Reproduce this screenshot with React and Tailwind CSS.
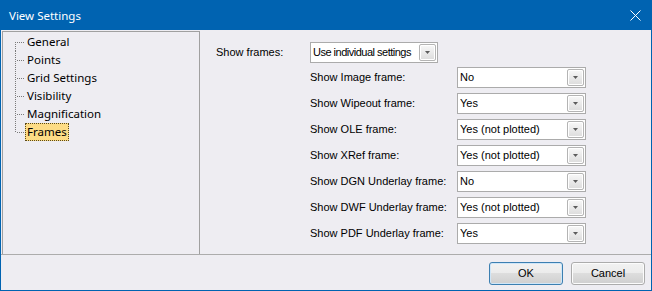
import React from 'react';

const treeItems = ['General', 'Points', 'Grid Settings', 'Visibility', 'Magnification', 'Frames'];

const frameRows = [
  ['Show Image frame:', 'No'],
  ['Show Wipeout frame:', 'Yes'],
  ['Show OLE frame:', 'Yes (not plotted)'],
  ['Show XRef frame:', 'Yes (not plotted)'],
  ['Show DGN Underlay frame:', 'No'],
  ['Show DWF Underlay frame:', 'Yes (not plotted)'],
  ['Show PDF Underlay frame:', 'Yes'],
];

function TreeLines({ first, last }) {
  return (
    <svg width="10" height="18" className="shrink-0" shapeRendering="crispEdges">
      <line x1="0.5" x2="0.5" y1={first ? 9 : 0} y2={last ? 10 : 18} stroke="#7a7a7a" strokeDasharray="1 1" />
      <line x1="2" x2="10" y1="9.5" y2="9.5" stroke="#7a7a7a" strokeDasharray="1 1" />
    </svg>
  );
}

function DropButton() {
  return (
    <div className="w-[17px] h-[17px] shrink-0 rounded-[2px] border border-[#b4b4b4] bg-gradient-to-b from-[#f8f8f8] to-[#dcdcdc] shadow-[inset_0_0_0_1px_#ffffff] flex items-center justify-center">
      <svg width="5" height="3" viewBox="0 0 5 3">
        <path d="M0 0h5L2.5 3z" fill="#5c5c5c" />
      </svg>
    </div>
  );
}

function Combo({ value, width, tight }) {
  return (
    <div className={`flex items-center h-[21px] ${width} bg-white border border-[#ababab] pl-[2px] pr-[1px]`}>
      <span className={`flex-1 min-w-0 overflow-hidden whitespace-nowrap leading-[19px] ${tight ? 'tracking-[-0.5px]' : ''}`}>{value}</span>
      <DropButton />
    </div>
  );
}

export default function App() {
  return (
    <div className="w-[652px] h-[291px] border border-[#0063b1] bg-[#eeedf2] flex flex-col text-black overflow-hidden">
      {/* title bar */}
      <div className="h-[29px] shrink-0 bg-[#0063b1] flex items-center justify-between pl-[8px] pr-[10px] text-white text-[11.5px] font-['Noto_Sans',sans-serif]">
        <span>View Settings</span>
        <svg width="11" height="11" viewBox="0 0 11 11">
          <path d="M0.5 0.5L10.5 10.5M10.5 0.5L0.5 10.5" stroke="#ffffff" strokeWidth="1" />
        </svg>
      </div>

      {/* body */}
      <div className="h-[225px] shrink-0 flex border-b border-[#acacac] pl-[1px] pt-[1px]">
        <div className="w-[198px] border-l border-t border-r border-[#a0a0a0] pt-[1px] pl-[12px] font-['Noto_Sans',sans-serif] text-[11.5px]">
          {treeItems.map((item, i) => (
            <div key={item} className="flex h-[18px] items-stretch">
              <TreeLines first={i === 0} last={i === treeItems.length - 1} />
              <span
                className={`px-[1px] leading-[16px] border ${item === 'Frames' ? 'bg-[#fddc86] border-dotted border-[#5a4a1a]' : 'border-transparent'}`}
              >
                {item}
              </span>
            </div>
          ))}
        </div>

        <div className="flex-1 pl-[16px] pt-[11px] font-['Liberation_Sans',Arial,sans-serif] text-[11px]">
          <div className="flex items-center">
            <span className="w-[94px]">Show frames:</span>
            <Combo value="Use individual settings" width="w-[128px]" tight />
          </div>
          <div className="ml-[94px] mt-[4px] flex flex-col gap-[5px]">
            {frameRows.map(([label, value]) => (
              <div key={label} className="flex items-center">
                <span className="w-[147px]">{label}</span>
                <Combo value={value} width="w-[129px]" />
              </div>
            ))}
          </div>
        </div>
      </div>

      {/* footer */}
      <div className="flex-1 flex justify-end items-start pt-[7px] pr-[6px] gap-[8px] font-['Liberation_Sans',Arial,sans-serif] text-[11px]">
        <button className="w-[74px] h-[23px] rounded-[3px] border border-[#3c7fb1] shadow-[inset_0_0_0_1px_#cfe6f8] bg-[linear-gradient(to_bottom,#f2f2f2_0%,#ebebeb_50%,#dddddd_50%,#cfcfcf_100%)]">
          OK
        </button>
        <button className="w-[74px] h-[23px] rounded-[3px] border border-[#acacac] shadow-[inset_0_0_0_1px_#fcfcfc] bg-[linear-gradient(to_bottom,#f2f2f2_0%,#ebebeb_50%,#dddddd_50%,#cfcfcf_100%)]">
          Cancel
        </button>
      </div>
    </div>
  );
}
